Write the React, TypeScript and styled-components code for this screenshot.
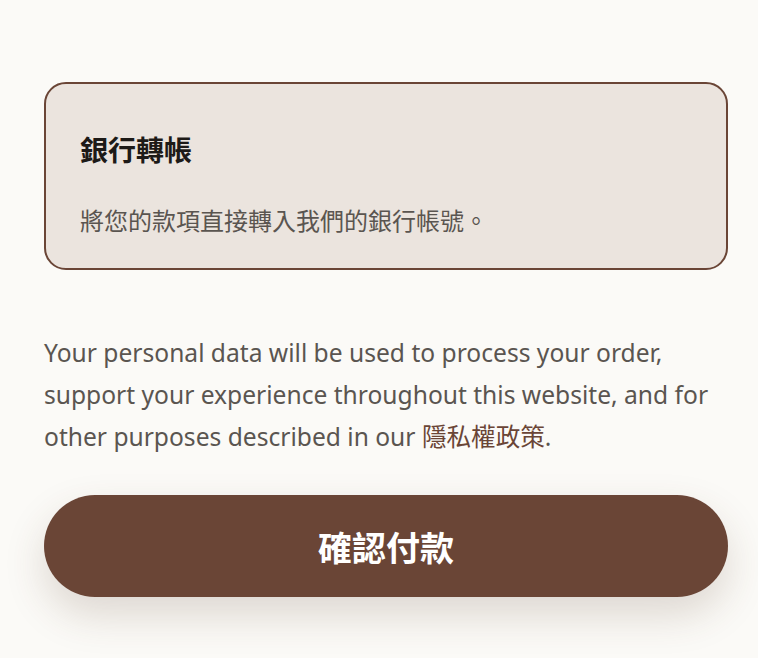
import React from 'react';
import styled, { createGlobalStyle } from 'styled-components';

const GlobalStyle = createGlobalStyle`
  html, body {
    margin: 0;
    padding: 0;
    background: #fbfaf7;
  }

  body {
    font-family: 'Noto Sans', 'Noto Sans CJK TC', sans-serif;
    -webkit-font-smoothing: antialiased;
  }
`;

const Page = styled.main`
  min-height: 100vh;
  box-sizing: border-box;
  padding: 82px 30px 40px 44px;
  width: 758px;
`;

const MethodCard = styled.section`
  border: 2px solid #6a4536;
  border-radius: 22px;
  background: #ebe4de;
  padding: 44px 34px 30px;
`;

const MethodTitle = styled.h3`
  margin: 0;
  font-family: 'Noto Sans CJK TC', sans-serif;
  font-size: 28px;
  line-height: 42px;
  font-weight: 700;
  color: #1d1a17;
`;

const MethodText = styled.p`
  margin: 32px 0 0;
  font-family: 'Noto Sans CJK TC', sans-serif;
  font-size: 24px;
  line-height: 36px;
  color: #5a5550;
`;

const Notice = styled.p`
  margin: 62px 0 0;
  font-size: 24.6px;
  line-height: 42px;
  color: #5a5550;
`;

const PolicyLink = styled.a`
  color: #6a4536;
  text-decoration: none;
`;

const ConfirmButton = styled.button`
  display: block;
  width: 100%;
  height: 102px;
  margin-top: 37px;
  border: none;
  border-radius: 51px;
  background: #6a4536;
  color: #ffffff;
  font-family: 'Noto Sans CJK TC', sans-serif;
  font-size: 34px;
  font-weight: 700;
  box-shadow: 0 18px 40px rgba(90, 60, 40, 0.18);
  cursor: pointer;
`;

export default function App() {
  return (
    <>
      <GlobalStyle />
      <Page>
        <MethodCard>
          <MethodTitle>銀行轉帳</MethodTitle>
          <MethodText>將您的款項直接轉入我們的銀行帳號。</MethodText>
        </MethodCard>

        <Notice>
          Your personal data will be used to process your order, support your experience
          throughout this website, and for other purposes described in our{' '}
          <PolicyLink href="#">隱私權政策</PolicyLink>.
        </Notice>

        <ConfirmButton type="button">確認付款</ConfirmButton>
      </Page>
    </>
  );
}
